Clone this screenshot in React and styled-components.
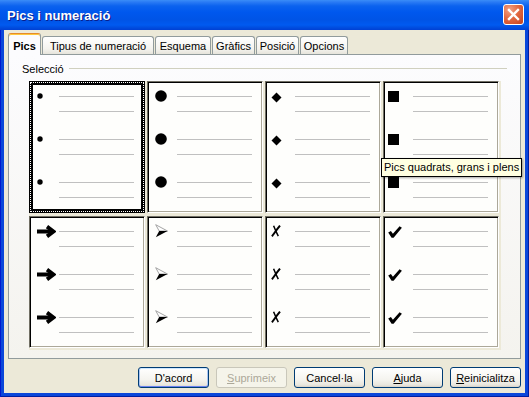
import React from "react";
import styled, { createGlobalStyle } from "styled-components";

const GlobalStyle = createGlobalStyle`
  html, body { margin: 0; padding: 0; }
  body {
    background: #fff;
    font-family: "Liberation Sans", Arial, sans-serif;
    font-size: 11px;
    color: #000;
  }
`;

const Window = styled.div`
  position: relative;
  width: 529px;
  height: 397px;
  display: flex;
  flex-direction: column;
  background: #0A47DA;
  box-shadow: inset 1px 0 #0019CF, inset -1px 0 #001EA0, inset 0 -1px #001EA0;
  overflow: hidden;
`;

const TitleBar = styled.div`
  flex: none;
  height: 30px;
  display: flex;
  align-items: center;
  justify-content: space-between;
  padding: 0 5px 0 7px;
  box-sizing: border-box;
  background: linear-gradient(#3A8DF7 0px, #2A7BF4 2px, #0B62EE 6px, #0058EE 12px, #0054E6 20px, #005AF0 25px, #0050E2 27px, #0040D4 30px);
`;

const Title = styled.span`
  color: #fff;
  font-size: 13px;
  font-weight: bold;
  text-shadow: 1px 1px #0A1D8A;
`;

const CloseButton = styled.div`
  width: 21px;
  height: 21px;
  box-sizing: border-box;
  border: 1px solid #fff;
  border-radius: 3px;
  background: radial-gradient(circle at 30% 25%, #F2A184 0%, #E26A43 45%, #C5401B 100%);
  display: flex;
  align-items: center;
  justify-content: center;
  margin-bottom: 1px;
`;

const Body = styled.div`
  flex: 1;
  margin: 0 4px 4px;
  padding: 3px 4px 0;
  background: #ECE9D8;
  display: flex;
  flex-direction: column;
`;

const TabStrip = styled.div`
  display: flex;
  align-items: flex-end;
  gap: 1px;
  height: 22px;
  margin-bottom: -1px;
  position: relative;
  z-index: 1;
`;

const Tab = styled.div`
  width: ${p => p.$w}px;
  height: ${p => (p.$active ? 22 : 18)}px;
  margin-bottom: ${p => (p.$active ? 0 : 1)}px;
  box-sizing: border-box;
  border: 1px solid #919B9C;
  border-bottom: none;
  border-radius: 3px 3px 0 0;
  display: flex;
  align-items: center;
  justify-content: center;
  padding-top: ${p => (p.$active ? 2 : 0)}px;
  font-weight: ${p => (p.$active ? "bold" : "normal")};
  background: ${p => (p.$active ? "#FCFCFE" : "linear-gradient(#FFFFFF, #F4F3EE 70%, #E6E4DB)")};
  border-top-color: ${p => (p.$active ? "#E68B2C" : "#919B9C")};
  box-shadow: ${p => (p.$active ? "inset 0 1px #FFC83C" : "none")};
  white-space: nowrap;
`;

const Panel = styled.div`
  flex: none;
  height: 305px;
  box-sizing: border-box;
  border: 1px solid #919B9C;
  background: linear-gradient(#FCFCFE, #F4F3EE);
  padding: 7px 13px 0;
`;

const GroupHead = styled.div`
  display: flex;
  align-items: center;
  gap: 5px;
  height: 13px;
`;

const Rule = styled.div`
  flex: 1;
  height: 1px;
  background: #D0D0BF;
`;

const Grid = styled.div`
  margin: 6px 0 0 7px;
  width: 472px;
  box-sizing: border-box;
  padding: 0 2px 2px 0;
  display: grid;
  grid-template-columns: repeat(4, 1fr);
  grid-auto-rows: 132px;
  gap: 3px 2px;
  background: #ECE9D8;
`;

const Cell = styled.div`
  box-sizing: border-box;
  border: 1px solid;
  border-color: ${p => (p.$selected ? "#000" : "#716F64 #FFFFFF #FFFFFF #716F64")};
  background: #FEFEFC;
  box-shadow: ${p =>
    p.$selected ? "inset 0 0 0 3px #000" : "inset 1px 1px #000, inset -1px -1px #ACA899"};
  outline: ${p => (p.$selected ? "1px dotted #fff" : "none")};
  outline-offset: -2px;
  padding-top: 6px;
  overflow: hidden;
`;

const Entry = styled.div`
  display: flex;
  align-items: flex-start;
  height: 43px;
`;

const Mark = styled.span`
  flex: none;
  width: 29px;
  height: 16px;
  box-sizing: border-box;
  padding-left: ${p => p.$left}px;
  padding-top: ${p => p.$top || 0}px;
  display: flex;
  align-items: center;
`;

const Lines = styled.div`
  padding-top: 8px;
  display: flex;
  flex-direction: column;
  gap: 14px;
`;

const Line = styled.div`
  width: 75px;
  height: 1px;
  background: #C0C0C0;
`;

const ButtonRow = styled.div`
  display: flex;
  justify-content: flex-end;
  gap: 7px;
  margin-top: 8px;
`;

const Button = styled.div`
  width: 71px;
  height: 21px;
  box-sizing: border-box;
  border: 1px solid ${p => (p.$disabled ? "#C9C7BA" : "#003C74")};
  border-radius: 3px;
  display: flex;
  align-items: center;
  justify-content: center;
  color: ${p => (p.$disabled ? "#ACA899" : "#000")};
  background: ${p => (p.$disabled ? "#F5F4EA" : "linear-gradient(#FFFFFF, #F5F4EF 60%, #E8E6DD 90%, #D6D0C5)")};
  box-shadow: ${p =>
    p.$default
      ? "inset 0 1px #CEE7FF, inset 0 -1px #6982EE, inset 1px 0 #A9C5F2, inset -1px 0 #A9C5F2"
      : "none"};
`;

const Key = styled.span`
  text-decoration: underline;
`;

const Tooltip = styled.div`
  position: absolute;
  left: 381px;
  top: 158px;
  padding: 2px 2px 3px;
  border: 1px solid #000;
  background: #FFFFE1;
  box-shadow: 1px 1px 2px rgba(0, 0, 0, 0.35);
  white-space: nowrap;
`;

const Dot = () => (
  <svg width="6" height="6" viewBox="0 0 6 6"><circle cx="3" cy="3" r="2.7" fill="#000" /></svg>
);

const BigDot = () => (
  <svg width="12" height="12" viewBox="0 0 12 12"><circle cx="6" cy="6" r="5.8" fill="#000" /></svg>
);

const Diamond = () => (
  <svg width="11" height="11" viewBox="0 0 11 11"><path d="M5.5 0.5L10.5 5.5L5.5 10.5L0.5 5.5Z" fill="#000" /></svg>
);

const Square = () => (
  <svg width="11" height="11" viewBox="0 0 11 11"><rect width="11" height="11" fill="#000" /></svg>
);

const Arrow = () => (
  <svg width="19" height="13" viewBox="0 0 19 13">
    <path d="M0 6.5H15" stroke="#000" strokeWidth="4" />
    <path d="M10 1.6L16.6 6.5L10 11.4" stroke="#000" strokeWidth="3.8" fill="none" />
  </svg>
);

const Arrowhead = () => (
  <svg width="13" height="14" viewBox="0 0 13 14">
    <path d="M0.7 0.7L12.5 7L4.2 7Z" fill="#fff" stroke="#9A9A9A" strokeWidth="0.9" strokeLinejoin="round" />
    <path d="M12.6 7L4.2 7L0.8 13.3Z" fill="#000" />
  </svg>
);

const Cross = () => (
  <svg width="10" height="12" viewBox="0 0 10 12">
    <path d="M1 11.3C3.4 8 6 4.2 9 0.6" stroke="#000" strokeWidth="2" fill="none" />
    <path d="M2.6 0.8C3.9 4 5.4 7.6 7.3 11.2" stroke="#000" strokeWidth="1.5" fill="none" />
  </svg>
);

const Check = () => (
  <svg width="14" height="12" viewBox="0 0 14 12">
    <path d="M0.2 6.6L2.9 4.9L4.9 7.8L11.6 0.2L13.9 1.7L5.6 11.7L3.6 11.7Z" fill="#000" />
  </svg>
);

const sets = [
  { id: "dot", Icon: Dot, left: 7, selected: true },
  { id: "big", Icon: BigDot, left: 7 },
  { id: "diamond", Icon: Diamond, left: 5, top: 2 },
  { id: "square", Icon: Square, left: 4 },
  { id: "arrow", Icon: Arrow, left: 7 },
  { id: "head", Icon: Arrowhead, left: 7 },
  { id: "cross", Icon: Cross, left: 5 },
  { id: "check", Icon: Check, left: 4, top: 1 },
];

const tabs = [
  { label: "Pics", w: 33, active: true },
  { label: "Tipus de numeració", w: 112 },
  { label: "Esquema", w: 56 },
  { label: "Gràfics", w: 43 },
  { label: "Posició", w: 43 },
  { label: "Opcions", w: 48 },
];

const BulletCell = ({ Icon, left, top, selected }) => (
  <Cell $selected={selected}>
    {[0, 1, 2].map(i => (
      <Entry key={i}>
        <Mark $left={left} $top={top}><Icon /></Mark>
        <Lines>
          <Line />
          <Line />
        </Lines>
      </Entry>
    ))}
  </Cell>
);

export default function App() {
  return (
    <>
      <GlobalStyle />
      <Window>
        <TitleBar>
          <Title>Pics i numeració</Title>
          <CloseButton>
            <svg width="13" height="13" viewBox="0 0 13 13">
              <path d="M2 2L11 11M11 2L2 11" stroke="#fff" strokeWidth="2.4" strokeLinecap="square" />
            </svg>
          </CloseButton>
        </TitleBar>
        <Body>
          <TabStrip>
            {tabs.map(t => (
              <Tab key={t.label} $w={t.w} $active={t.active}>{t.label}</Tab>
            ))}
          </TabStrip>
          <Panel>
            <GroupHead>
              <span>Selecció</span>
              <Rule />
            </GroupHead>
            <Grid>
              {sets.map(s => (
                <BulletCell key={s.id} {...s} />
              ))}
            </Grid>
          </Panel>
          <ButtonRow>
            <Button $default>D'acord</Button>
            <Button $disabled><Key>S</Key>uprimeix</Button>
            <Button>Cancel·la</Button>
            <Button><Key>A</Key>juda</Button>
            <Button><Key>R</Key>einicialitza</Button>
          </ButtonRow>
        </Body>
        <Tooltip>Pics quadrats, grans i plens</Tooltip>
      </Window>
    </>
  );
}
